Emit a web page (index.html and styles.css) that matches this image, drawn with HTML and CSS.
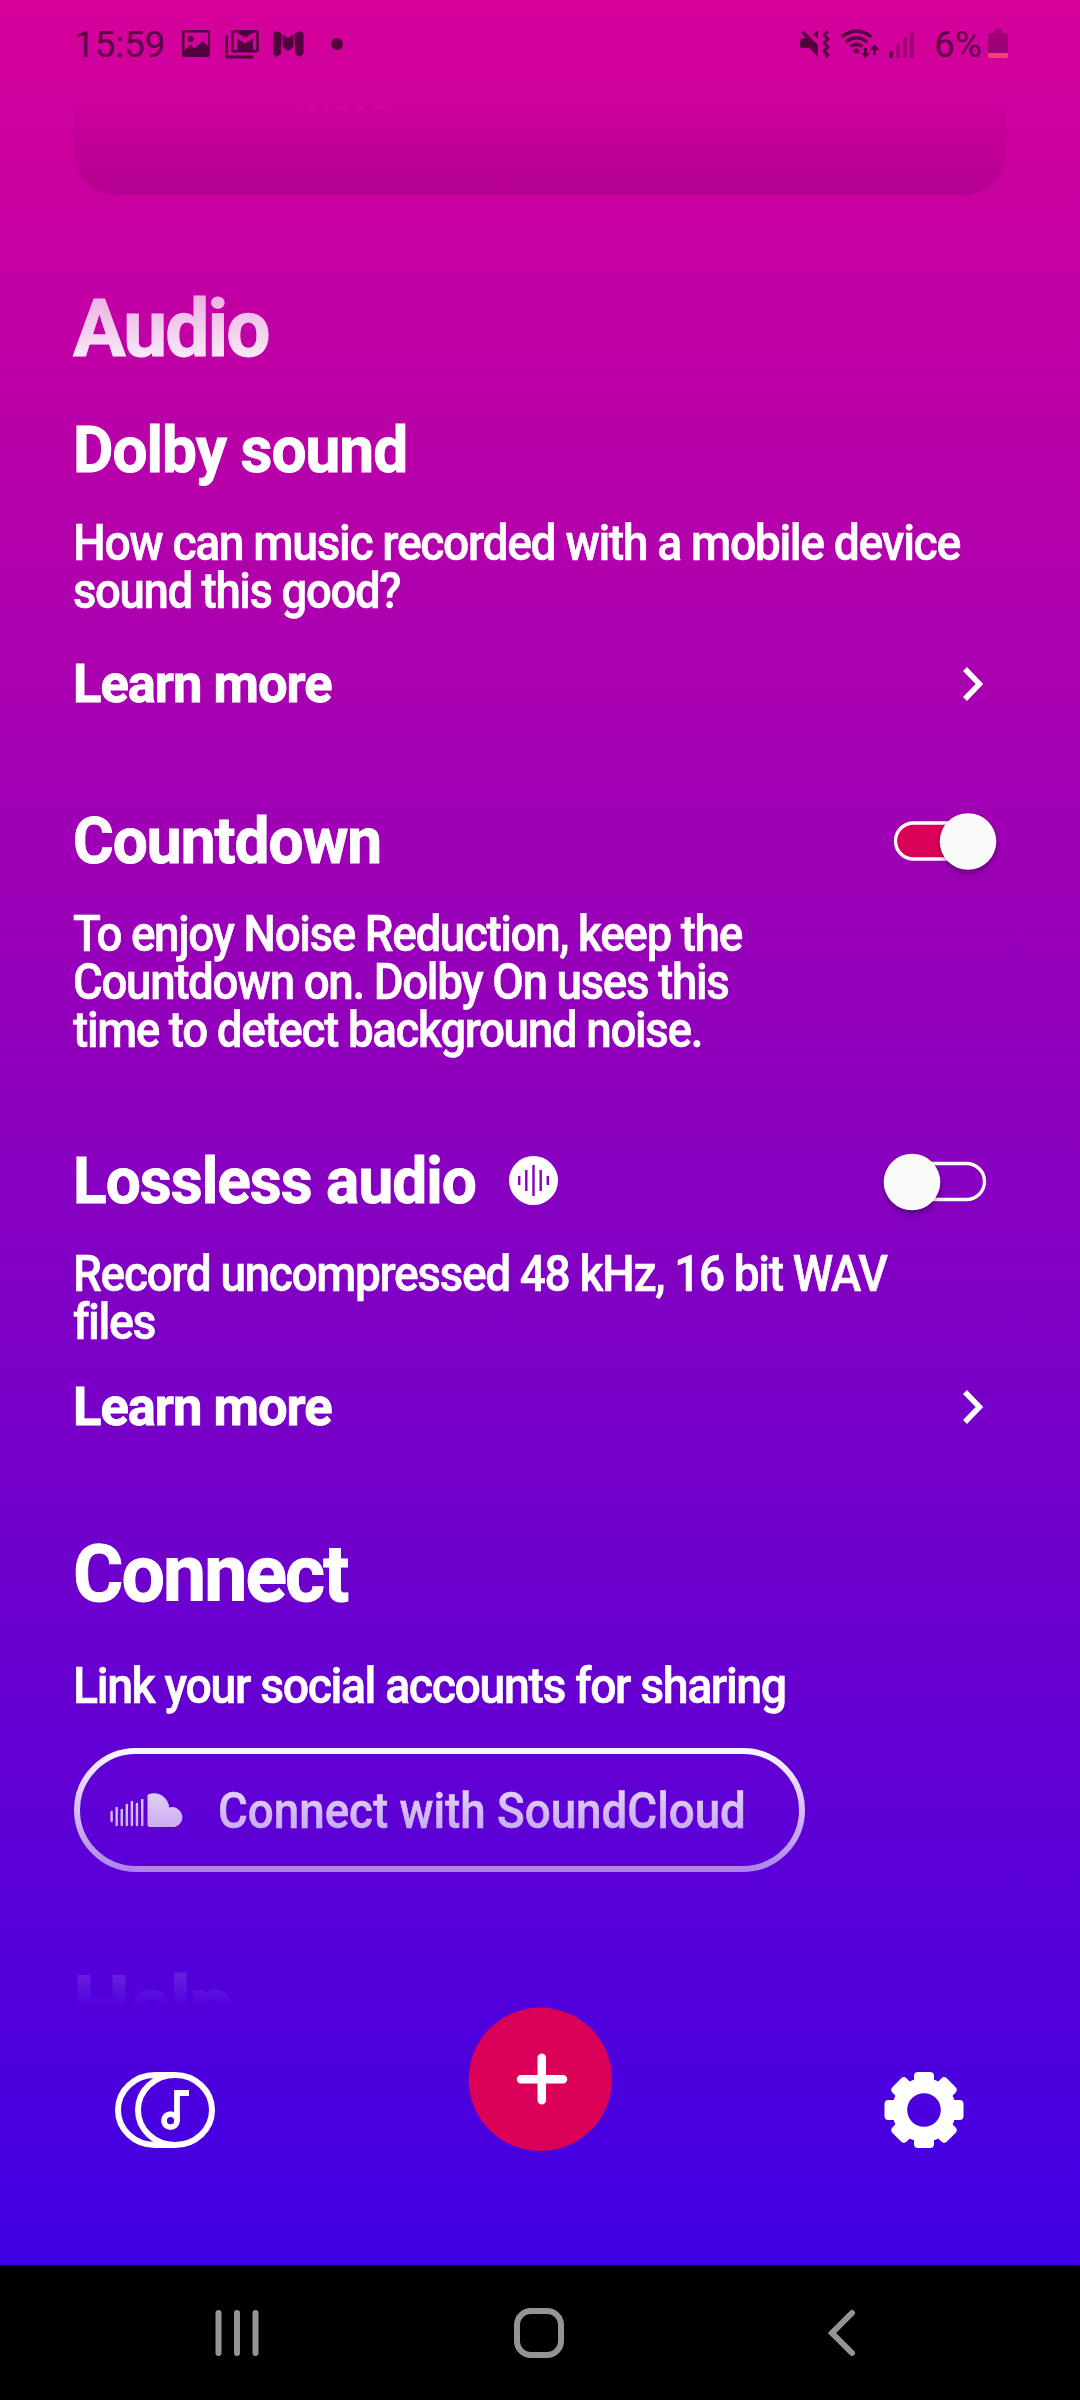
FILE: index.html
```html
<!DOCTYPE html>
<html lang="en">
<head>
<meta charset="utf-8">
<title>Settings</title>
<link rel="stylesheet" href="styles.css">
</head>
<body>
<div class="screen">
  <header class="status">
    <div class="status-group">
      <span class="clock">15:59</span>
      <svg class="status-left" width="172" height="40" viewBox="174 24 172 40" fill="#52003e">
        <path fill-rule="evenodd" d="M184 30h24a2 2 0 0 1 2 2v23a2 2 0 0 1-2 2h-24a2 2 0 0 1-2-2v-23a2 2 0 0 1 2-2zM184.500 32.500v18l6-6 4 4 8-7.500 5.500 5v-13.500z"/>
        <circle cx="190.500" cy="39" r="3"/>
        <path fill="none" stroke="#52003e" stroke-width="2.800" d="M226.500 35.500v20a1.500 1.500 0 0 0 1.500 1.500h25.500"/>
        <rect x="232.300" y="31.300" width="25.200" height="20" rx="2" fill="none" stroke="#52003e" stroke-width="2.600"/>
        <path d="M237 38.500l8 5 8-5v13h-16zM236 32h18l-9 6z"/>
        <path d="M273 33l3.500-2 4.500 2v21l-4.500 3-3.500-3zM295 33l4.500-2 4 2v21l-4 3-4.500-3zM283 34.500l5 3.500 5-3.500v13l-5 3.500-5-3.500z"/>
        <path d="M280 33l4 3v9l-4 2zM296 33l-4 3v9l4 2z" opacity=".45"/>
        <circle cx="337" cy="44" r="6"/>
      </svg>
    </div>
    <div class="status-group">
      <svg class="status-right" width="120" height="40" viewBox="798 24 120 40" fill="#52003e">
        <path d="M800 40.500a2 2 0 0 1 2-2h3.500l-4-6 2-2L818 45v12l-9-9h-7a2 2 0 0 1-2-2zM818 30v9l-5-4.500z"/>
        <path fill="none" stroke="#52003e" stroke-width="2.800" d="M828 31l-4 4 4 4-4 4 4 4-4 4 4 4-2 2"/>
        <g fill="none" stroke="#52003e" stroke-width="3.200"><path d="M841.500 37q15-12 30 0M846 42q10.500-8.500 21 0M850.500 46.500q6-4.500 12 0"/></g>
        <circle cx="856.500" cy="51" r="2.500"/>
        <path d="M864 48h3v5h3l-4.500 5-4.500-5h3zM873 55h3v-5h3l-4.500-6-4.500 6h3z"/>
        <rect x="889" y="51" width="4" height="7" rx="2"/>
        <g fill="#9d0077"><rect x="896" y="44" width="4" height="14" rx="1.500"/><rect x="903" y="37" width="4" height="21" rx="1.500"/><rect x="910" y="31" width="4" height="27" rx="1.500"/></g>
      </svg>
      <span class="level">6%</span>
      <svg class="battery" width="20" height="30" viewBox="0 0 20 30">
        <path fill="#9d0077" d="M6 2a2 2 0 0 1 2-2h4a2 2 0 0 1 2 2v2h4a2 2 0 0 1 2 2v18H0V6a2 2 0 0 1 2-2h4z"/>
        <path fill="#f43f73" d="M0 24h20v3a2 2 0 0 1-2 2H2a2 2 0 0 1-2-2z"/>
      </svg>
    </div>
  </header>

  <main class="scroll">
    <section class="promo"><span class="promo-text">more</span></section>

    <h1 class="section audio">Audio</h1>
    <h2 class="title dolby">Dolby sound</h2>
    <p class="body"><span class="line l1">How can music recorded with a mobile device</span><span class="line l2">sound this good?</span></p>
    <div class="row link first-link"><span class="more">Learn more</span>
      <svg class="chevron" width="20" height="34" viewBox="0 0 20 34"><path d="M2 2l14.500 15L2 32"/></svg>
    </div>

    <div class="row setting countdown"><h2 class="title">Countdown</h2>
      <svg class="toggle" width="120" height="64" viewBox="0 0 120 64">
        <rect x="15.500" y="14" width="89" height="36" rx="18" fill="#db0058" stroke="#fff" stroke-width="3.300"/>
        <circle class="thumb" cx="88" cy="32.500" r="28.300"/>
      </svg>
    </div>
    <p class="body"><span class="line l3">To enjoy Noise Reduction, keep the</span><span class="line l4">Countdown on. Dolby On uses this</span><span class="line l5">time to detect background noise.</span></p>

    <div class="row setting lossless">
      <div class="title-group"><h2 class="title">Lossless audio</h2>
        <svg class="wave" width="49" height="49" viewBox="0 0 49 49">
          <circle cx="24.500" cy="24.500" r="24.500" fill="#fff"/>
          <path fill="none" stroke="#8600be" stroke-width="2.400" d="M10.200 20v9M17.300 14v21M24.500 9v31M31.700 14v21M38.800 20v9"/>
        </svg>
      </div>
      <svg class="toggle" width="120" height="64" viewBox="0 0 120 64">
        <rect x="15.500" y="14.500" width="89" height="36" rx="18" fill="none" stroke="#fff" stroke-width="3.300"/>
        <circle class="thumb" cx="32" cy="33" r="28.300"/>
      </svg>
    </div>
    <p class="body"><span class="line l6">Record uncompressed 48 kHz, 16 bit WAV</span><span class="line l7">files</span></p>
    <div class="row link second-link"><span class="more">Learn more</span>
      <svg class="chevron" width="20" height="34" viewBox="0 0 20 34"><path d="M2 2l14.500 15L2 32"/></svg>
    </div>

    <h1 class="section connect">Connect</h1>
    <p class="body link-text"><span class="line l8">Link your social accounts for sharing</span></p>
    <button class="soundcloud" type="button">
      <svg class="cloud" width="75" height="34" viewBox="0 0 74 34" preserveAspectRatio="none">
        <path fill="none" stroke="#fff" stroke-width="2.400" stroke-linecap="round" d="M1.600 19v9M6.600 15v17M11.600 17v15M16.600 12v20M21.600 9v23M26.600 11v21M31.800 7v25"/>
        <path fill="#fff" d="M37 3q0-1.500 1.500-2C48-2 57.500 4 58.500 14.500A10 10 0 1 1 64 34H39a2 2 0 0 1-2-2z"/>
      </svg>
      <span class="sc-label">Connect with SoundCloud</span>
    </button>
    <h1 class="section help">Help</h1>
  </main>

  <nav class="tabs">
    <svg class="tab library" width="100" height="76" viewBox="0 0 100 76" fill="none" stroke="#fff" stroke-width="6">
      <path d="M60 3H40A37 35 0 0 0 40 73H60"/>
      <ellipse cx="60" cy="38" rx="37" ry="35"/>
      <circle cx="55.500" cy="48.700" r="6.500" stroke-width="5.800"/>
      <path d="M62 49V21h12" stroke-width="5.800"/>
    </svg>
    <svg class="fab" width="144" height="144" viewBox="0 0 144 144">
      <circle cx="72.300" cy="72.300" r="71.700" fill="#db0058"/>
      <path d="M73.800 50.800v42.500M53 72.300h42" stroke="#fff" stroke-width="8.500" stroke-linecap="round"/>
    </svg>
    <svg class="tab gear" width="80" height="76" viewBox="-40 -38 80 76">
      <defs><mask id="hole"><rect x="-40" y="-40" width="80" height="80" fill="#fff"/><circle r="16.800" fill="#000"/></mask></defs>
      <g fill="#fff" mask="url(#hole)">
        <circle r="32"/>
        <rect x="-10" y="-38" width="20" height="76" rx="4"/>
        <rect x="-39.500" y="-10" width="79" height="20" rx="4"/>
        <rect x="-10" y="-38.500" width="20" height="77" rx="4" transform="rotate(45)"/>
        <rect x="-10" y="-38.500" width="20" height="77" rx="4" transform="rotate(-45)"/>
      </g>
    </svg>
  </nav>

  <footer class="system">
    <svg width="46" height="48" viewBox="0 0 46 48"><path d="M4.500 4v40M23 4v40M41.500 4v40"/></svg>
    <svg class="home" width="52" height="52" viewBox="0 0 52 52"><rect x="4" y="4" width="44" height="44" rx="14"/></svg>
    <svg width="32" height="48" viewBox="0 0 32 48"><path d="M27 4L7 24l20 20"/></svg>
  </footer>
</div>
</body>
</html>
```
FILE: styles.css
```css
* { box-sizing: border-box; }
body {
  margin: 0;
  background: #000;
  color: #fff;
  font-family: Roboto, "Liberation Sans", sans-serif;
}
h1, h2, p { margin: 0; }
svg { display: block; flex: none; }
.screen {
  width: 1080px;
  height: 2400px;
  display: flex;
  flex-direction: column;
  overflow: hidden;
  background: linear-gradient(#d6009a 0, #4000e4 2265px);
}

/* status bar */
.status {
  height: 102px;
  flex: none;
  padding: 24px 72px 0 74px;
  display: flex;
  justify-content: space-between;
  align-items: flex-start;
  color: #5c0046;
}
.status-group { display: flex; }
.clock, .level { font-size: 37px; line-height: 40px; white-space: nowrap; }
.clock { width: 100px; letter-spacing: -0.2px; padding-top: 1px; }
.level { width: 54px; margin-left: 16px; padding-top: 1px; }
.battery { margin-top: 5px; }

/* scrolling settings list, faded at both ends */
.scroll {
  height: 1905px;
  flex: none;
  padding: 0 74px;
  overflow: hidden;
  -webkit-mask-image: linear-gradient(transparent, #000 280px, #000 1640px, transparent);
  mask-image: linear-gradient(transparent, #000 280px, #000 1640px, transparent);
}
.promo {
  height: 93px;
  border-radius: 0 0 42px 42px;
  background: rgba(0, 0, 0, 0.32);
  overflow: hidden;
}
.promo-text {
  display: block;
  margin: -29px 0 0 220px;
  font-size: 42px;
  line-height: 46px;
  font-weight: 700;
}

/* condensed type: every text run is narrowed from its left edge */
.section, .title, .line, .more, .sc-label {
  transform-origin: 0 0;
  transform: translate(-1px, 1px) scaleX(var(--narrow, 1));
  white-space: nowrap;
}
.section { font-size: 80px; line-height: 80px; font-weight: 700; }
.title, .more { --narrow: 0.971; letter-spacing: -1px; -webkit-text-stroke: 0.9px #fff; }
.title { font-size: 64px; line-height: 64px; font-weight: 700; }
.more { font-size: 54px; line-height: 54px; font-weight: 700; }
.body {
  margin-top: 36px;
  font-size: 50px;
  line-height: 48px;
  font-weight: 500;
  letter-spacing: -1.5px;
  -webkit-text-stroke: 0.6px #fff;
}
.line { display: block; }
.l1 { --narrow: 0.926; }
.l2 { --narrow: 0.91; }
.l3 { --narrow: 0.915; }
.l4 { --narrow: 0.915; }
.l5 { --narrow: 0.916; }
.l6 { --narrow: 0.921; }
.l7 { --narrow: 0.93; }
.l8 { --narrow: 0.929; }
.audio { margin-top: 93px; letter-spacing: -2px; --narrow: 0.98; -webkit-text-stroke: 1px #fff; }
.dolby { margin-top: 50px; }
.row { display: flex; justify-content: space-between; align-items: center; }
.link { height: 54px; padding-right: 23px; }
.first-link { margin-top: 42px; }
.second-link { margin-top: 34px; }
.setting { height: 64px; padding-right: 6px; }
.countdown { margin-top: 99px; }
.lossless { margin-top: 96px; }
.title-group { display: flex; align-items: center; gap: 20px; }
.wave { margin-bottom: 2px; }
.chevron { margin-top: 2px; }
.chevron path { fill: none; stroke: #fff; stroke-width: 5.5; }
.toggle { overflow: visible; }
.thumb { fill: #fafafa; filter: drop-shadow(0 3px 3px rgba(0, 0, 0, 0.35)); }
.connect { margin-top: 100px; letter-spacing: -2px; --narrow: 0.962; -webkit-text-stroke: 1px #fff; }
.link-text { margin-top: 48px; }
.soundcloud {
  width: 731px;
  height: 124px;
  margin-top: 39px;
  padding: 0 0 0 30px;
  display: flex;
  align-items: center;
  border: 6px solid #fff;
  border-radius: 62px;
  background: none;
  color: #fff;
  font: 500 50px/50px Roboto, "Liberation Sans", sans-serif;
}
.sc-label { margin-left: 34px; --narrow: 0.914; -webkit-text-stroke: 0.5px #fff; }
.help { margin-top: 93px; letter-spacing: -2px; --narrow: 1.01; -webkit-text-stroke: 1px #fff; }

/* bottom tabs */
.tabs {
  height: 258px;
  flex: none;
  padding: 0 116px 0 115px;
  display: grid;
  grid-template-columns: 1fr 144px 1fr;
  grid-template-rows: 144px;
  align-items: end;
}
.tab { margin-bottom: 3px; }
.fab { overflow: visible; }
.gear { justify-self: end; }

/* system navigation */
.system {
  flex: 1;
  padding: 0 223px 0 214px;
  display: flex;
  justify-content: space-between;
  align-items: center;
  background: #000;
}
.home { margin-right: 7px; }
.system svg { fill: none; stroke: #949494; stroke-width: 6; stroke-linecap: round; }
```
